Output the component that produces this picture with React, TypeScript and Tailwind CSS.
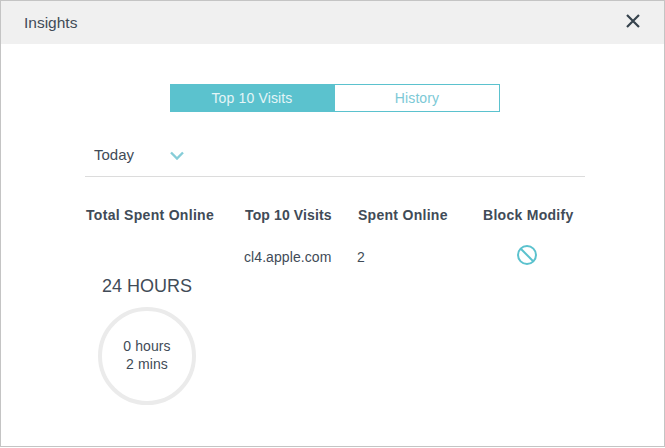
const teal = "#5bc2ce";

function BlockIcon() {
  return (
    <svg width="20" height="20" viewBox="0 0 20 20" fill="none" stroke={teal} strokeWidth="2">
      <circle cx="10" cy="10" r="9" />
      <path d="M3.8 3.8 16.2 16.2" />
    </svg>
  );
}

function CloseIcon() {
  return (
    <svg width="14" height="14" viewBox="0 0 14 14" fill="none" stroke="#36434d" strokeWidth="2.2">
      <path d="M1 1 13 13M13 1 1 13" />
    </svg>
  );
}

export default function App() {
  return (
    <div className="h-[448px] w-[665px] bg-white font-['Liberation_Sans',Arial,sans-serif] text-[#414b57]">
      <div className="flex h-[447px] w-[665px] flex-col border border-[#c4c4c4]">
        <header className="flex h-[43px] shrink-0 items-center justify-between bg-[#f0f0f0] pr-[24px] pl-[23px]">
          <span className="pt-[1px] text-[15.5px]">Insights</span>
          <span className="mb-[3px] flex"><CloseIcon /></span>
        </header>

        <div className="flex pt-[40px] pl-[169px]">
          <div className="flex h-[28px] w-[330px] text-[14px]">
            <div className="flex w-[163px] items-center justify-center bg-[#5bc2ce] pl-[1px] tracking-[0.15px] text-[#e4f5f7]">Top 10 Visits</div>
            <div className="flex flex-1 items-center justify-center border border-l-2 border-[#5bc2ce] tracking-[0.1px] text-[#7cc9d6]">History</div>
          </div>
        </div>

        <div className="mt-[21px] ml-[84px] flex h-[44px] w-[500px] items-center border-b border-[#dcdcdc] pt-[1px] pl-[9px]">
          <span className="w-[76px] text-[15px]">Today</span>
          <svg width="14" height="9" viewBox="0 0 14 9" fill="none" stroke="#86cdd8" strokeWidth="2.4">
            <path d="M1 1.5 7 7.5 13 1.5" />
          </svg>
        </div>

        <div className="ml-[85px] flex pt-[28px] text-[14px]">
          <div className="flex w-[159px] flex-col">
            <span className="text-[14px] font-bold tracking-[0.3px] whitespace-nowrap">Total Spent Online</span>
            <span className="mt-[50px] ml-[16px] text-[18px] leading-[21px]">24 HOURS</span>
            <div className="mt-[10px] ml-[12px] flex h-[98px] w-[98px] flex-col items-center justify-center rounded-full border-[4px] border-[#ebebeb] pb-[2px] text-[14px] leading-[18px] tracking-[0.1px]">
              <span>0 hours</span>
              <span>2 mins</span>
            </div>
          </div>
          <div className="flex w-[113px] flex-col">
            <span className="text-[14px] font-bold tracking-[0.12px] whitespace-nowrap">Top 10 Visits</span>
            <span className="mt-[21px] -ml-[1px] tracking-[0.08px]">cl4.apple.com</span>
          </div>
          <div className="flex w-[125px] flex-col">
            <span className="text-[14px] font-bold tracking-[0.28px] whitespace-nowrap">Spent Online</span>
            <span className="mt-[21px] -ml-[1px]">2</span>
          </div>
          <div className="flex flex-col items-center">
            <span className="text-[14px] font-bold tracking-[0.28px] whitespace-nowrap">Block Modify</span>
            <span className="mt-[19px] mr-[2px] flex"><BlockIcon /></span>
          </div>
        </div>
      </div>
    </div>
  );
}
